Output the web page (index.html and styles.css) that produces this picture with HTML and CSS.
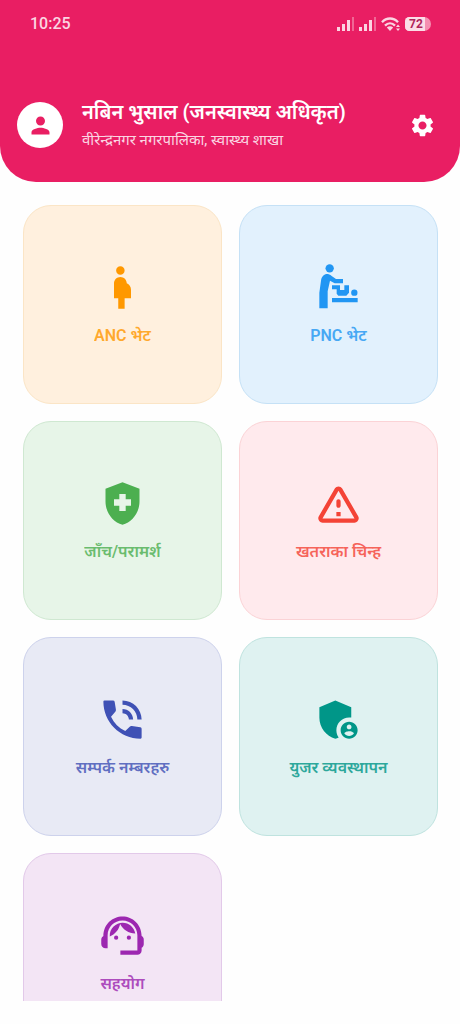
FILE: index.html
```html
<!DOCTYPE html>
<html lang="ne">
<head>
<meta charset="utf-8">
<meta name="viewport" content="width=device-width, initial-scale=1">
<title>ANC / PNC</title>
<link rel="stylesheet" href="styles.css">
</head>
<body>
<div class="app">
  <header class="header">
    <div class="status">
      <span class="time">10:25</span>
      <div class="indicators">
        <svg class="signal" viewBox="0 0 18 14" aria-hidden="true"><path d="M0 10h3v4H0zM5 7h3v7H5zM10 3h3v11h-3z"/><path opacity=".4" d="M15 0h2v14h-2z"/></svg>
        <svg class="signal" viewBox="0 0 18 14" aria-hidden="true"><path d="M0 10h3v4H0zM5 7h3v7H5zM10 3h3v11h-3z"/><path opacity=".4" d="M15 0h2v14h-2z"/></svg>
        <svg class="wifi" viewBox="0 0 20 14" aria-hidden="true"><path class="wave" d="M1 5.2C5.6.3 12.4.3 17 5.2M4 8.6c3-3 7-3 10 0"/><path d="M5.800 10.600c2-1.800 4.400-1.800 6.400 0L9 14zM15 10l2-2.500 2 2.500zM15 11.500h4l-2 2.500z"/></svg>
        <span class="battery"><span class="level">72</span></span>
      </div>
    </div>
    <div class="profile">
      <div class="avatar">
        <svg class="icon-small" viewBox="0 0 24 24" aria-hidden="true"><path d="M12 12c2.210 0 4-1.790 4-4s-1.790-4-4-4-4 1.790-4 4 1.790 4 4 4zm0 2c-2.670 0-8 1.340-8 4v2h16v-2c0-2.660-5.330-4-8-4z"/></svg>
      </div>
      <div class="identity">
        <h1 class="name">नबिन भुसाल (जनस्वास्थ्य अधिकृत)</h1>
        <p class="office">वीरेन्द्रनगर नगरपालिका, स्वास्थ्य शाखा</p>
      </div>
      <button class="settings" type="button" aria-label="Settings">
        <svg class="icon-small" viewBox="0 0 24 24" aria-hidden="true"><path d="M19.140 12.940c.04-.3.06-.61.06-.94 0-.32-.02-.64-.07-.94l2.030-1.580c.18-.14.23-.41.12-.61l-1.920-3.320c-.12-.22-.37-.29-.59-.22l-2.390.96c-.5-.38-1.030-.7-1.620-.94l-.36-2.540c-.04-.24-.24-.41-.48-.41h-3.840c-.24 0-.43.17-.47.41l-.36 2.540c-.59.24-1.130.57-1.620.94l-2.390-.96c-.22-.08-.47 0-.59.22L2.740 8.870c-.12.21-.08.47.12.61l2.030 1.580c-.05.3-.09.63-.09.94s.02.64.07.94l-2.030 1.580c-.18.14-.23.41-.12.61l1.920 3.320c.12.22.37.29.59.22l2.390-.96c.5.38 1.030.7 1.620.94l.36 2.540c.05.24.24.41.48.41h3.840c.24 0 .44-.17.47-.41l.36-2.540c.59-.24 1.130-.56 1.620-.94l2.390.96c.22.08.47 0 .59-.22l1.920-3.320c.12-.22.07-.47-.12-.61l-2.010-1.580zM12 15.600c-1.980 0-3.600-1.620-3.600-3.600s1.620-3.600 3.600-3.600 3.600 1.620 3.600 3.600-1.620 3.600-3.600 3.600z"/></svg>
      </button>
    </div>
  </header>

  <main class="menu">
    <button class="card orange" type="button">
      <svg class="icon" viewBox="0 0 24 24" aria-hidden="true"><path d="M9 4c0-1.110.89-2 2-2s2 .89 2 2-.89 2-2 2-2-.89-2-2zm7 9c-.01-1.340-.83-2.510-2-3 0-1.660-1.340-3-3-3s-3 1.340-3 3v7h2v5h3v-5h3v-4z"/></svg>
      <span class="label">ANC भेट</span>
    </button>
    <button class="card blue" type="button">
      <svg class="icon" viewBox="54 20 153 153" aria-hidden="true"><circle cx="104" cy="39" r="12.500"/><path d="M73 159V112L78 76C80 62 90 54 101 57C105 58 108 60 111 63L123 71H144V84H119L105 76L98 108V159ZM111 128H188V141H111ZM111 90H135V104H148V90H162V112L154 121H130L125 115V102H111Z"/><circle cx="178" cy="112" r="9.500"/></svg>
      <span class="label">PNC भेट</span>
    </button>
    <button class="card green" type="button">
      <svg class="icon" viewBox="0 0 24 24" aria-hidden="true"><path fill-rule="evenodd" d="M12 2 4 5v6.090c0 5.050 3.410 9.760 8 10.910 4.590-1.150 8-5.860 8-10.910V5l-8-3zM10.500 13H8v-3h2.500V7.500h3V10H16v3h-2.500v2.500h-3V13z"/></svg>
      <span class="label">जाँच/परामर्श</span>
    </button>
    <button class="card red" type="button">
      <svg class="icon" viewBox="0 0 24 24" aria-hidden="true"><path fill-rule="evenodd" d="M12 5.990 19.530 19H4.470L12 5.990M2.740 18c-.77 1.330.19 3 1.730 3h15.060c1.540 0 2.500-1.670 1.730-3L13.730 4.990c-.77-1.330-2.690-1.330-3.460 0L2.740 18z"/><path d="M11 11v2c0 .55.45 1 1 1s1-.45 1-1v-2c0-.55-.45-1-1-1s-1 .45-1 1zm0 5h2v2h-2z"/></svg>
      <span class="label">खतराका चिन्ह</span>
    </button>
    <button class="card indigo" type="button">
      <svg class="icon" viewBox="0 0 24 24" aria-hidden="true"><path d="M15 12h2c0-2.760-2.240-5-5-5v2c1.660 0 3 1.340 3 3zm4 0h2c0-4.970-4.030-9-9-9v2c3.870 0 7 3.130 7 7z"/><path d="M3.500 3H7.500Q8.200 3 8.300 3.700L8.900 7.300Q9 8 8.500 8.500L6.600 10.700C8 13.700 10.300 16 13.300 17.400L15.400 15.400Q15.800 15 16.400 15.100L20.400 15.700Q21 15.800 21 16.400V20.500Q21 21 20.500 21C10.800 21 3 13.200 3 3.500Q3 3 3.500 3Z"/></svg>
      <span class="label">सम्पर्क नम्बरहरु</span>
    </button>
    <button class="card teal" type="button">
      <svg class="icon" viewBox="0 0 24 24" aria-hidden="true"><path d="M17 11c.34 0 .67.04 1 .09V6.270L10.500 3 3 6.270v4.910c0 4.540 3.200 8.790 7.500 9.820.55-.13 1.080-.32 1.600-.55-.69-.98-1.100-2.170-1.100-3.450 0-3.310 2.690-6 6-6z"/><path fill-rule="evenodd" d="M17 13c-2.210 0-4 1.790-4 4s1.790 4 4 4 4-1.790 4-4-1.790-4-4-4zm0 1.380c.62 0 1.120.51 1.120 1.120s-.51 1.120-1.120 1.120-1.120-.51-1.120-1.120.5-1.120 1.120-1.120zm0 5.370c-.93 0-1.740-.46-2.240-1.170.05-.72 1.510-1.080 2.240-1.080s2.190.36 2.240 1.080c-.5.71-1.310 1.170-2.240 1.170z"/></svg>
      <span class="label">युजर व्यवस्थापन</span>
    </button>
    <button class="card purple" type="button">
      <svg class="icon" viewBox="0 0 24 24" aria-hidden="true"><path d="M21 12.220C21 6.730 16.740 3 12 3c-4.690 0-9 3.650-9 9.280-.6.34-1 .98-1 1.720v2c0 1.100.9 2 2 2h1v-6.100c0-3.870 3.130-7 7-7s7 3.130 7 7V19h-8v2h8c1.100 0 2-.9 2-2v-1.220c.59-.31 1-.92 1-1.640v-2.300c0-.7-.41-1.310-1-1.620z"/><circle cx="9" cy="13" r="1"/><circle cx="15" cy="13" r="1"/><path d="M18 11.030C17.520 8.180 15.040 6 12.050 6c-3.030 0-6.290 2.510-6.030 6.450 2.470-1.010 4.330-3.210 4.860-5.890 1.310 2.630 4 4.440 7.120 4.470z"/></svg>
      <span class="label">सहयोग</span>
    </button>
  </main>
</div>
</body>
</html>
```
FILE: styles.css
```css
* {
  box-sizing: border-box;
}

body {
  margin: 0;
  background: #fefefe;
  font-family: Roboto, "Noto Sans Devanagari", "Noto Sans", sans-serif;
}

button {
  font: inherit;
  cursor: pointer;
}

svg {
  display: block;
  fill: currentColor;
}

.app {
  display: flex;
  flex-direction: column;
  height: 100vh;
  padding-bottom: 23px;
}

.header {
  flex: none;
  padding: 12px 17px 31px;
  border-radius: 0 0 36px 36px;
  background: #e91e63;
  color: #fff;
}

.status {
  display: flex;
  align-items: center;
  justify-content: space-between;
  padding: 0 12px 0 13px;
  color: #fbd5e2;
}

.time {
  font-size: 16px;
  font-weight: 500;
  line-height: 24px;
}

.indicators {
  display: flex;
  align-items: center;
  gap: 4px;
}

.signal {
  width: 18px;
  height: 14px;
}

.wifi {
  width: 20px;
  height: 14px;
}

.wave {
  fill: none;
  stroke: currentColor;
  stroke-width: 2.4;
}

.battery {
  width: 26px;
  overflow: hidden;
  border-radius: 5px 8px 8px 5px;
  background: #f58fb1;
}

.level {
  display: block;
  width: 20px;
  padding-left: 2px;
  background: #fbdde7;
  color: #b0245a;
  font-size: 12px;
  font-weight: 700;
  line-height: 14px;
  text-align: center;
}

.profile {
  display: flex;
  align-items: center;
  gap: 19px;
  margin-top: 63px;
}

.avatar {
  display: grid;
  flex: none;
  place-items: center;
  width: 46px;
  height: 46px;
  border-radius: 50%;
  background: #fff;
  color: #e91e63;
}

.icon-small {
  width: 27px;
  height: 27px;
}

.identity {
  display: grid;
  flex: 1;
  gap: 4px;
  min-width: 0;
}

.name,
.office {
  margin: 0;
  white-space: nowrap;
}

.name {
  font-size: 20px;
  font-weight: 600;
  line-height: 26px;
}

.office {
  color: #fbd5e2;
  font-size: 15px;
  line-height: 22px;
}

.settings {
  flex: none;
  padding: 0;
  margin-right: 7px;
  border: 0;
  background: none;
  color: #fff;
}

.menu {
  display: grid;
  flex: 1;
  grid-template-columns: 1fr 1fr;
  align-content: start;
  gap: 17px;
  min-height: 0;
  padding: 23px 22px 23px 23px;
  overflow-y: auto;
  scrollbar-width: none;
}

.card {
  display: flex;
  flex-direction: column;
  align-items: center;
  justify-content: center;
  gap: 10px;
  aspect-ratio: 1;
  padding: 0;
  border: 1px solid;
  border-radius: 28px;
}

.icon {
  width: 51px;
  height: 51px;
}

.label {
  font-size: 16px;
  font-weight: 600;
  line-height: 25px;
  opacity: 0.8;
}

.orange {
  border-color: #fbe5c6;
  background: #fff0de;
  color: #ff9800;
}

.blue {
  border-color: #c5e1f6;
  background: #e2f1fd;
  color: #2196f3;
}

.green {
  border-color: #cfe8d1;
  background: #e7f5e8;
  color: #4caf50;
}

.red {
  border-color: #fbd3d6;
  background: #ffeaed;
  color: #f44336;
}

.indigo {
  border-color: #cdd2ec;
  background: #e8eaf5;
  color: #3f51b5;
}

.teal {
  border-color: #bfe3df;
  background: #dff2f1;
  color: #009688;
}

.purple {
  border-color: #e2c9e9;
  background: #f3e5f5;
  color: #9c27b0;
}
```
